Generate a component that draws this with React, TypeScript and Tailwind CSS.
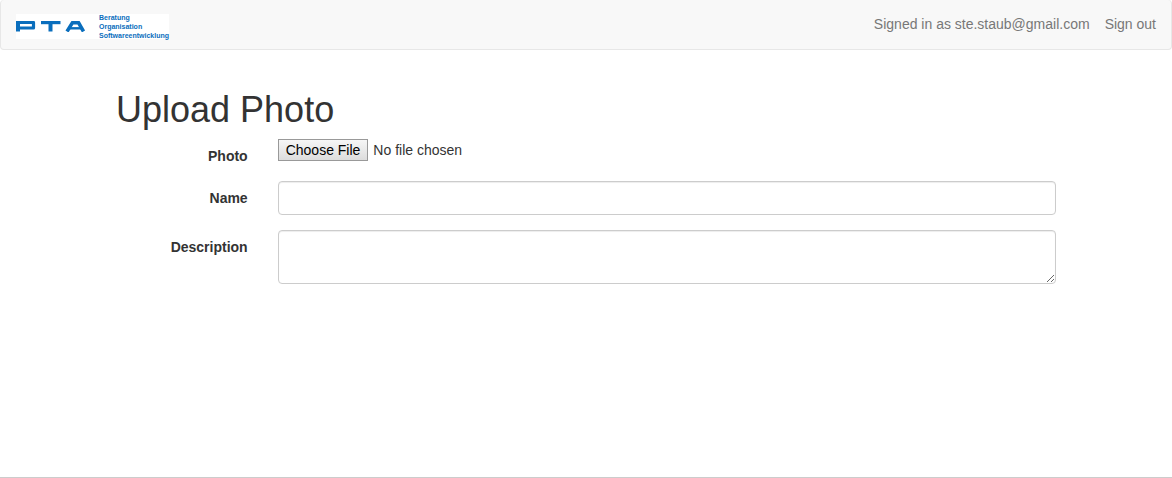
import type { ReactNode } from "react";

const controlClass =
  "block w-full rounded border border-[#ccc] bg-white px-3 py-1.5 text-sm leading-5 text-[#555] shadow-[inset_0_1px_1px_rgba(0,0,0,0.075)] outline-none focus:border-[#66afe9]";

function Logo() {
  return (
    <a href="#" aria-label="PTA home" className="flex h-[25px] items-center bg-white text-[#0a6ebd]">
      <svg width="70" height="11" viewBox="0 0 70 11" fill="none" stroke="currentColor" strokeWidth="3" aria-hidden="true">
        <path d="M2 1.5H17.5V7H2" strokeWidth="3.2" strokeLinejoin="round" />
        <path d="M2 0V10.5" strokeWidth="4" />
        <path d="M25 1.6H44.5" strokeWidth="3.2" />
        <path d="M34.5 1V10.5" strokeWidth="4" />
        <path d="M51 10.5L56.5 1.6H62.5L67.5 10.5" strokeWidth="3.6" strokeLinejoin="round" />
        <path d="M53 7.3H66" strokeWidth="2.4" />
      </svg>
      <span className="ml-[13px] text-[7px] leading-[9px] font-bold">
        Beratung
        <br />
        Organisation
        <br />
        Softwareentwicklung
      </span>
    </a>
  );
}

function Field({ id, label, children }: { id: string; label: string; children: ReactNode }) {
  return (
    <div className="grid grid-cols-6">
      <label htmlFor={id} className="px-[15px] pt-[7px] text-right font-bold">
        {label}
      </label>
      <div className="col-span-5 px-[15px]">{children}</div>
    </div>
  );
}

export default function App() {
  return (
    <div className="flex min-h-screen flex-col border-b border-[#ccc] bg-white font-['Liberation_Sans',Arial,sans-serif] text-sm leading-5 text-[#333]">
      <nav className="flex items-center justify-between rounded border border-t-0 border-[#e7e7e7] bg-[#f8f8f8] px-[15px] pt-3.5 pb-2.5">
        <Logo />
        <div className="flex gap-[15px] pb-[5px] text-[#777]">
          <span>Signed in as ste.staub@gmail.com</span>
          <a href="#">Sign out</a>
        </div>
      </nav>
      <main className="mx-auto w-full max-w-[970px] pt-10">
        <h1 className="mb-[9px] px-[15px] text-4xl leading-10">Upload Photo</h1>
        <form className="flex flex-col gap-[15px]">
          <Field id="photo" label="Photo">
            <input
              id="photo"
              type="file"
              className="block w-full text-sm leading-5 file:mr-[5px] file:h-[22px] file:rounded-none file:border file:border-solid file:border-[#999] file:bg-linear-to-b file:from-[#f6f6f6] file:to-[#dddddd] file:px-[7px] file:py-0 file:text-sm file:text-black"
            />
          </Field>
          <Field id="name" label="Name">
            <input id="name" type="text" className={controlClass} />
          </Field>
          <Field id="description" label="Description">
            <textarea id="description" rows={2} className={controlClass} />
          </Field>
        </form>
      </main>
    </div>
  );
}
